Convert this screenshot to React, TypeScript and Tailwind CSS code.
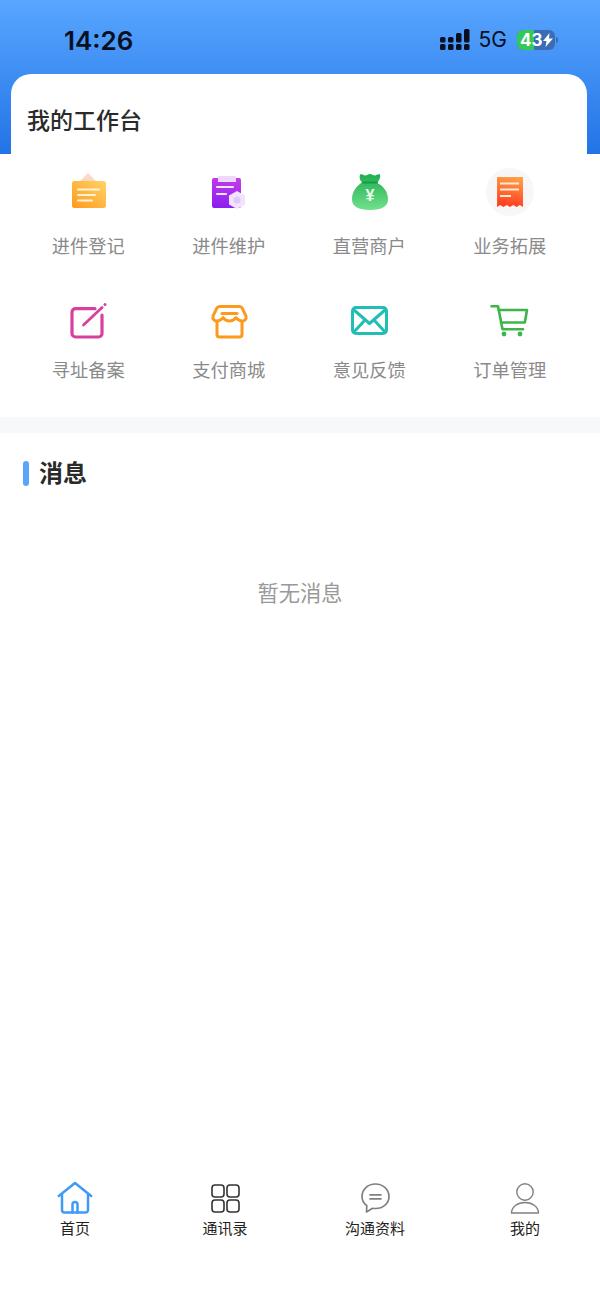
import React from 'react';

const CJK = 'font-["Noto_Sans_CJK_SC","Noto_Sans",sans-serif]';

const JinJian = () => (
  <svg width="48" height="48" viewBox="0 0 48 48">
    <defs>
      <linearGradient id="jj" x1="1" y1="0" x2="0" y2="1">
        <stop offset="0" stopColor="#ffd465" />
        <stop offset="1" stopColor="#ff991d" />
      </linearGradient>
    </defs>
    <path d="M24 5l-9 9h18z" fill="#fcd9c6" />
    <rect x="8" y="13" width="34" height="27" rx="2.5" fill="url(#jj)" />
    <path d="M14 21.5h21M14 27h17M14 32.5h14" stroke="#fff3d8" strokeWidth="2" strokeLinecap="round" />
  </svg>
);

const Weihu = () => (
  <svg width="48" height="48" viewBox="0 0 48 48">
    <defs>
      <linearGradient id="wh" x1="0.5" y1="0" x2="0.3" y2="1">
        <stop offset="0" stopColor="#c23bea" />
        <stop offset="1" stopColor="#8a1ff0" />
      </linearGradient>
    </defs>
    <path d="M7 12a2 2 0 0 1 2-2h4v4h18v-4h3a2 2 0 0 1 2 2v26a2 2 0 0 1-2 2H9a2 2 0 0 1-2-2z" fill="url(#wh)" />
    <rect x="13" y="8" width="18" height="6" rx="1" fill="#ecd9fb" />
    <path d="M12 19h16M12 26h9" stroke="#f6e6ff" strokeWidth="2" strokeLinecap="round" />
    <path d="M32 23l8 4.5v9L32 41l-8-4.5v-9z" fill="#f1e3fd" />
    <circle cx="32" cy="32" r="3.5" fill="#e2c6fa" />
  </svg>
);

const MoneyBag = () => (
  <svg width="48" height="48" viewBox="0 0 48 48">
    <defs>
      <linearGradient id="mb" x1="0.5" y1="0" x2="0.5" y2="1">
        <stop offset="0" stopColor="#1fae4f" />
        <stop offset="1" stopColor="#72e08c" />
      </linearGradient>
    </defs>
    <path d="M15 6.500c2.200-1 3.500.5 5 1s3-1.500 5-1.500 3.500 2 5 1.500 2.800-2 5-1c.8 2.800-.5 6-3 8.500C39 18 43 24.500 43 31c0 7.500-6 11-18 11S7 38.500 7 31c0-6.500 4-13 10-16.500-2.500-2.500-2.800-5.200-2-8z" fill="url(#mb)" />
    <path d="M18 14.500h14" stroke="#179a45" strokeWidth="2" strokeLinecap="round" />
    <text x="25" y="33" textAnchor="middle" fontSize="16" fontWeight="700" fill="#e9fbe9" fontFamily="Liberation Sans">¥</text>
  </svg>
);

const Receipt = () => (
  <svg width="48" height="48" viewBox="0 0 48 48">
    <defs>
      <linearGradient id="rc" x1="0.6" y1="0" x2="0.4" y2="1">
        <stop offset="0" stopColor="#ff9f45" />
        <stop offset="1" stopColor="#ff3a1f" />
      </linearGradient>
    </defs>
    <circle cx="24" cy="24" r="24" fill="#f7f7f8" />
    <path d="M11 9h26v30l-3.200-2-3.300 2-3.200-2-3.300 2-3.200-2-3.300 2-3.300-2-3.100 2z" fill="url(#rc)" />
    <path d="M14 15.500h19M14 21.500h19M14 28h11" stroke="#ffe9d6" strokeWidth="2" />
  </svg>
);

const Edit = () => (
  <svg width="48" height="48" viewBox="0 0 48 48" fill="none" stroke="#d8409f">
    <path d="M31 16.700H11.500a3.500 3.500 0 0 0-3.500 3.500V41.500a3.500 3.500 0 0 0 3.500 3.500H34.500a3.500 3.500 0 0 0 3.500-3.500V23" strokeWidth="3.200" strokeLinecap="round" />
    <path d="M19.500 33L38 15.500" strokeWidth="2.800" strokeLinecap="round" />
    <circle cx="41" cy="12.500" r="1.500" fill="#d8409f" stroke="none" />
  </svg>
);

const Store = () => (
  <svg width="48" height="48" viewBox="0 0 48 48" fill="none" stroke="#fb9a1c" strokeWidth="3" strokeLinecap="round" strokeLinejoin="round">
    <path d="M14.500 14.500H34.500A3 3 0 0 1 37.200 16.200L41 24.200C41.600 27 39.500 29 37 29C34.700 29 33 27.700 31 25.700C29.500 27.700 27.500 29 24.500 29C21.500 29 19.500 27.700 18 25.700C16 27.700 14.300 29 12 29C9.500 29 7.400 27 8 24.200L11.800 16.200A3 3 0 0 1 14.500 14.500z" />
    <path d="M17 21.500h15" />
    <path d="M12 30v12.500a2.500 2.500 0 0 0 2.500 2.500h20a2.500 2.500 0 0 0 2.500-2.500V30" />
  </svg>
);

const Mail = () => (
  <svg width="48" height="48" viewBox="0 0 48 48" fill="none" stroke="#22bdb5" strokeWidth="3" strokeLinecap="round" strokeLinejoin="round">
    <rect x="7.500" y="15.500" width="34" height="26" rx="3.500" />
    <path d="M9 18l15.500 13.500L40 18" />
    <path d="M9 40l10.500-11.500M40 40L29.500 28.500" />
  </svg>
);

const Cart = () => (
  <svg width="48" height="48" viewBox="0 0 48 48" fill="none" stroke="#3cb54a" strokeWidth="2.600" strokeLinecap="round" strokeLinejoin="round">
    <path d="M5.500 14.200h6.500l4.500 23h20.500" />
    <path d="M12.800 18H41l-2.200 12.500H15" />
    <circle cx="18" cy="42" r="2.400" fill="#3cb54a" stroke="none" />
    <circle cx="34" cy="42" r="2.400" fill="#3cb54a" stroke="none" />
  </svg>
);

const HomeTab = () => (
  <svg width="36" height="36" viewBox="0 0 36 36" fill="none" stroke="#3f9bf5" strokeWidth="2.500" strokeLinecap="round" strokeLinejoin="round">
    <path d="M1.800 16L18 3l16.200 13" />
    <path d="M5 14.500V30a2.500 2.500 0 0 0 2.500 2.500h21A2.500 2.500 0 0 0 31 30V14.500" />
    <path d="M15.500 32.500v-8a2.500 2.500 0 0 1 5 0v8" />
  </svg>
);

const GridTab = () => (
  <svg width="36" height="36" viewBox="0 0 36 36" fill="none" stroke="#333333" strokeWidth="1.600">
    <rect x="5" y="5" width="12" height="12" rx="3" />
    <rect x="20" y="5" width="12" height="12" rx="3" />
    <rect x="5" y="20" width="12" height="12" rx="3" />
    <rect x="20" y="20" width="12" height="12" rx="3" />
  </svg>
);

const ChatTab = () => (
  <svg width="36" height="36" viewBox="0 0 36 36" fill="none" stroke="#808080" strokeWidth="1.700" strokeLinecap="round" strokeLinejoin="round">
    <path d="M18.500 4C11 4 5 9.200 5 16.500c0 4 1.800 7 4.800 9.200L9.500 32l6-3.700c1 .2 2 .2 3 .2C26 28.500 32 23.500 32 16.500S26 4 18.500 4z" />
    <path d="M13 14.800h11M13 18.800h11" />
  </svg>
);

const UserTab = () => (
  <svg width="36" height="36" viewBox="0 0 36 36" fill="none" stroke="#808080" strokeWidth="1.400" strokeLinejoin="round">
    <circle cx="18" cy="12" r="8.200" />
    <path d="M4.500 33c0-6 6-10.500 13.500-10.500S31.500 27 31.500 33z" />
  </svg>
);

const SignalBars = () => (
  <svg width="30" height="22" viewBox="0 0 30 22" fill="#080f20">
    <rect x="0" y="15" width="5.500" height="6" rx="1.500" />
    <rect x="8" y="15" width="5.500" height="6" rx="1.500" />
    <rect x="16" y="15" width="5.500" height="6" rx="1.500" />
    <rect x="24" y="15" width="5.500" height="6" rx="1.500" />
    <rect x="0" y="8" width="5.500" height="5.500" rx="1.500" />
    <rect x="8" y="8" width="5.500" height="5.500" rx="1.500" />
    <rect x="16" y="4" width="5.500" height="9.500" rx="1.500" />
    <rect x="24" y="0" width="5.500" height="13.500" rx="1.500" />
  </svg>
);

const Battery = () => (
  <div className="relative flex h-[20px] w-[38px] items-center overflow-hidden rounded-[6px] bg-[#3a6db5]">
    <div className="absolute inset-y-0 left-0 w-[17px] bg-[#34c759]" />
    <span className="relative ml-[3px] font-['Inter',sans-serif] text-[17px] leading-none font-bold text-white">43</span>
    <svg className="relative ml-[1px]" width="10" height="14" viewBox="0 0 10 14" fill="#ffffff">
      <path d="M6.500 0L0 8h3.500L2.500 14 10 5.500H6z" />
    </svg>
  </div>
);

const items = [
  { label: '进件登记', icon: <JinJian /> },
  { label: '进件维护', icon: <Weihu /> },
  { label: '直营商户', icon: <MoneyBag /> },
  { label: '业务拓展', icon: <Receipt /> },
  { label: '寻址备案', icon: <Edit /> },
  { label: '支付商城', icon: <Store /> },
  { label: '意见反馈', icon: <Mail /> },
  { label: '订单管理', icon: <Cart /> },
];

const tabs = [
  { label: '首页', icon: <HomeTab /> },
  { label: '通讯录', icon: <GridTab /> },
  { label: '沟通资料', icon: <ChatTab /> },
  { label: '我的', icon: <UserTab /> },
];

export default function App() {
  return (
    <div className={`flex h-[1299px] w-[600px] flex-col overflow-hidden bg-white ${CJK}`}>
      <header className="h-[154px] bg-gradient-to-b from-[#58a6ff] to-[#2273e6]">
        <div className="flex h-[74px] items-center justify-between pt-[6px] pr-[42px] pl-[64px]">
          <span className="font-['Inter',sans-serif] text-[26px] font-semibold text-[#080f20]">14:26</span>
          <div className="flex items-center">
            <SignalBars />
            <span className="ml-[9px] font-['Inter',sans-serif] text-[21px] text-[#080f20]">5G</span>
            <div className="ml-[10px]">
              <Battery />
            </div>
            <div className="ml-[1px] h-[6px] w-[2px] rounded-r-full bg-[#3a6db5]" />
          </div>
        </div>
        <div className="mr-[13px] ml-[11px] flex h-[80px] items-center rounded-t-[20px] bg-white px-[16px] pt-[9px]">
          <h1 className="text-[23px] leading-[32px] font-medium text-[#2a2a2a]">我的工作台</h1>
        </div>
      </header>

      <section className="grid grid-cols-4 gap-y-[33px] pt-[14px] pr-[20px] pb-[34px] pl-[18px]">
        {items.map((item) => (
          <div key={item.label} className="flex flex-col items-center">
            {item.icon}
            <span className="mt-[16px] mb-[1px] text-[18.250px] leading-[26px] text-[#8a8a8a]">{item.label}</span>
          </div>
        ))}
      </section>

      <div className="h-[16px] bg-[#f7f8fa]" />

      <main className="flex-1">
        <div className="mt-[23px] flex items-center pl-[23px]">
          <div className="mt-[2px] h-[25px] w-[6px] rounded-full bg-[#5aa5fb]" />
          <h2 className="ml-[10px] text-[24px] leading-[32px] font-bold text-[#2a2a2a]">消息</h2>
        </div>
        <p className="mt-[89px] text-center text-[21.250px] leading-[30px] text-[#999999]">暂无消息</p>
      </main>

      <nav className="grid h-[129px] grid-cols-4 pt-[10px]">
        {tabs.map((tab) => (
          <div key={tab.label} className="flex flex-col items-center">
            {tab.icon}
            <span className="mt-[2px] text-[15px] leading-[20px] text-[#222222]">{tab.label}</span>
          </div>
        ))}
      </nav>
    </div>
  );
}
